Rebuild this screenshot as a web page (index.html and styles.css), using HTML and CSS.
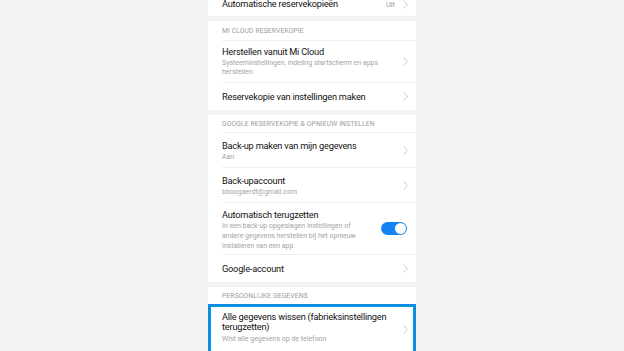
FILE: index.html
```html
<!DOCTYPE html>
<html lang="nl">
<head>
<meta charset="utf-8">
<title>Back-up en reset</title>
<link rel="stylesheet" href="styles.css">
</head>
<body>
<div class="page">
  <section class="card">
    <div class="row single first-cut">
      <div class="text"><div class="title">Automatische reservekopieën</div></div>
      <span class="value">Uit</span>
      <svg class="chev" viewBox="0 0 5 9"><polyline points="0.5,0.5 4.5,4.5 0.5,8.5"/></svg>
    </div>
  </section>

  <section class="card">
    <div class="header h-first">Mi Cloud reservekopie</div>
    <div class="row two-sub">
      <div class="text">
        <div class="title">Herstellen vanuit Mi Cloud</div>
        <div class="sub">Systeeminstellingen, indeling startscherm en apps herstellen</div>
      </div>
      <svg class="chev" viewBox="0 0 5 9"><polyline points="0.5,0.5 4.5,4.5 0.5,8.5"/></svg>
    </div>
    <div class="row single last">
      <div class="text"><div class="title">Reservekopie van instellingen maken</div></div>
      <svg class="chev" viewBox="0 0 5 9"><polyline points="0.5,0.5 4.5,4.5 0.5,8.5"/></svg>
    </div>
  </section>

  <section class="card">
    <div class="header">Google reservekopie &amp; opnieuw instellen</div>
    <div class="row one-sub">
      <div class="text">
        <div class="title">Back-up maken van mijn gegevens</div>
        <div class="sub">Aan</div>
      </div>
      <svg class="chev" viewBox="0 0 5 9"><polyline points="0.5,0.5 4.5,4.5 0.5,8.5"/></svg>
    </div>
    <div class="row one-sub">
      <div class="text">
        <div class="title">Back-upaccount</div>
        <div class="sub">bboogaerdt@gmail.com</div>
      </div>
      <svg class="chev" viewBox="0 0 5 9"><polyline points="0.5,0.5 4.5,4.5 0.5,8.5"/></svg>
    </div>
    <div class="row three-sub">
      <div class="text">
        <div class="title">Automatisch terugzetten</div>
        <div class="sub">In een back-up opgeslagen instellingen of andere gegevens herstellen bij het opnieuw installeren van een app</div>
      </div>
      <span class="toggle"><span class="knob"></span></span>
    </div>
    <div class="row single last">
      <div class="text"><div class="title">Google-account</div></div>
      <svg class="chev" viewBox="0 0 5 9"><polyline points="0.5,0.5 4.5,4.5 0.5,8.5"/></svg>
    </div>
  </section>

  <section class="card">
    <div class="header">Persoonlijke gegevens</div>
    <div class="highlight">
      <div class="row reset last">
        <div class="text">
          <div class="title">Alle gegevens wissen (fabrieksinstellingen terugzetten)</div>
          <div class="sub">Wist alle gegevens op de telefoon</div>
        </div>
        <svg class="chev" viewBox="0 0 5 9"><polyline points="0.5,0.5 4.5,4.5 0.5,8.5"/></svg>
      </div>
    </div>
  </section>
</div>
</body>
</html>
```

FILE: styles.css
```css
html, body {
  margin: 0;
  padding: 0;
}
body {
  background: #f3f3f3;
  height: 351px;
  overflow: hidden;
  font-family: Roboto, "Noto Sans", "Liberation Sans", sans-serif;
  color: #111111;
}
.page {
  width: 208px;
  margin: 0 auto;
  display: flex;
  flex-direction: column;
  gap: 5px;
  transform: translateY(-8px);
}
.card {
  background: #ffffff;
}
.header {
  height: 17px;
  padding-left: 14px;
  display: flex;
  align-items: center;
  font-size: 6.8px;
  text-transform: uppercase;
  color: #9b9b9b;
  letter-spacing: 0.1px;
}
.header.h-first {
  height: 19px;
}
.row {
  margin-left: 14px;
  padding-right: 8px;
  display: flex;
  align-items: center;
  border-top: 1px solid #efefef;
  box-sizing: border-box;
}
.row.first-cut {
  border-top: none;
  height: 24px;
}
.text {
  flex: 1;
  min-width: 0;
}
.title {
  font-size: 9.2px;
  line-height: 12px;
  letter-spacing: -0.2px;
  color: #111111;
}
.sub {
  font-size: 7px;
  line-height: 10px;
  color: #a3a3a3;
  padding-right: 6px;
}
.single {
  height: 28px;
}
.one-sub {
  height: 35px;
  padding-top: 1px;
}
.two-sub {
  height: 42px;
}
.two-sub .sub {
  line-height: 9px;
  padding-top: 1px;
}
.three-sub {
  height: 52px;
  align-items: flex-start;
  padding-top: 6px;
}
.three-sub .text {
  flex: 0 1 142px;
}
.three-sub .toggle {
  margin-top: 13px;
  margin-left: auto;
}
.value {
  font-size: 7.4px;
  color: #9b9b9b;
  margin-right: 8px;
}
.chev {
  width: 5px;
  height: 9px;
  flex: none;
  fill: none;
  stroke: #c4c4c4;
  stroke-width: 0.9;
}
.toggle {
  width: 26px;
  height: 13px;
  border-radius: 7px;
  background: #1384f2;
  flex: none;
  display: flex;
  align-items: center;
  justify-content: flex-end;
  padding: 0 1px;
  box-sizing: border-box;
  margin-right: 1px;
}
.knob {
  width: 11px;
  height: 11px;
  border-radius: 50%;
  background: #ffffff;
}
.highlight {
  border: 3px solid #0a8fe2;
  height: 52px;
}
.highlight .row {
  margin-left: 11px;
  padding-right: 5px;
  border-top: none;
  height: 100%;
  align-items: flex-start;
  padding-top: 5px;
}
.highlight .chev {
  margin-top: 13px;
}
.reset .title {
  line-height: 10px;
}
.reset .sub {
  margin-top: 2px;
}
```
